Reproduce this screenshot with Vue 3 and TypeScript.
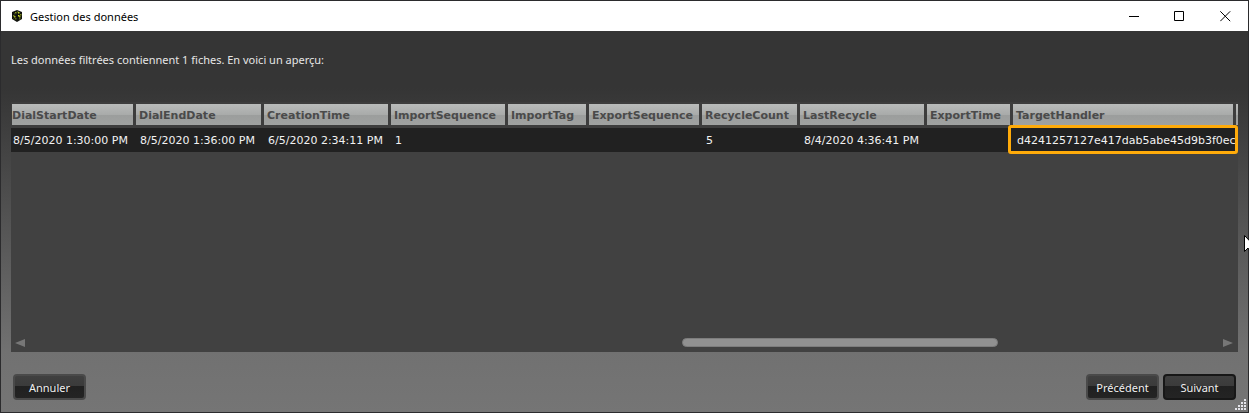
<script setup lang="ts">
interface Column {
  name: string
  width: number
  value: string
  marked?: boolean
}

const columns: Column[] = [
  { name: 'DialStartDate', width: 125, value: '8/5/2020 1:30:00 PM' },
  { name: 'DialEndDate', width: 128, value: '8/5/2020 1:36:00 PM' },
  { name: 'CreationTime', width: 127, value: '6/5/2020 2:34:11 PM' },
  { name: 'ImportSequence', width: 117, value: '1' },
  { name: 'ImportTag', width: 81, value: '' },
  { name: 'ExportSequence', width: 113, value: '' },
  { name: 'RecycleCount', width: 98, value: '5' },
  { name: 'LastRecycle', width: 127, value: '8/4/2020 4:36:41 PM' },
  { name: 'ExportTime', width: 86, value: '' },
  { name: 'TargetHandler', width: 223, value: 'd4241257127e417dab5abe45d9b3f0ec', marked: true },
]

const scroll = { start: 54.8, size: 26.4 }

// Lit facets of the cube in the title bar
const facets: [number, number, string][] = [
  [4, 2, '#8f9d1c'], [6, 1, '#4d5a18'], [7, 2, '#c3d426'], [3, 3, '#39401c'],
  [2, 5, '#6f7d1e'], [3, 6, '#aebd22'], [4, 8, '#5e6b1b'], [7, 5, '#d4e62b'],
  [8, 6, '#a5b521'], [9, 4, '#7b8a1f'], [8, 8, '#545f1b'], [2, 8, '#2f351b'],
]

const gripDots: [number, number][] = [
  [9, 0], [6, 3], [9, 3], [3, 6], [6, 6], [9, 6], [0, 9], [3, 9], [6, 9], [9, 9],
]
</script>

<template>
  <div class="window">
    <header class="titlebar">
      <svg class="logo" width="12" height="12" viewBox="0 0 12 12" aria-hidden="true">
        <path d="M6 0 11 2V9L6 12 1 9V2Z" fill="#11130d" />
        <rect v-for="(f, i) in facets" :key="i" :x="f[0]" :y="f[1]" width="1.5" height="1.5" :fill="f[2]" />
      </svg>
      <h1 class="title">Gestion des données</h1>
      <div class="controls">
        <button type="button" class="control" aria-label="Réduire">
          <svg width="11" height="11" viewBox="0 0 11 11"><path d="M1 5.5H11" stroke="#000" fill="none" /></svg>
        </button>
        <button type="button" class="control" aria-label="Agrandir">
          <svg width="11" height="11" viewBox="0 0 11 11"><path d="M.5 .5H9.5V9.5H.5Z" stroke="#000" fill="none" /></svg>
        </button>
        <button type="button" class="control" aria-label="Fermer">
          <svg width="11" height="11" viewBox="0 0 11 11"><path d="M.3 .3 10.2 10.2M10.2 .3 .3 10.2" stroke="#000" fill="none" /></svg>
        </button>
      </div>
    </header>

    <main class="content">
      <p class="message">Les données filtrées contiennent 1 fiches. En voici un aperçu:</p>

      <section class="grid" aria-label="Aperçu des fiches">
        <table>
          <colgroup>
            <col v-for="c in columns" :key="c.name" :style="{ width: c.width + 'px' }" />
            <col />
          </colgroup>
          <thead>
            <tr>
              <th v-for="c in columns" :key="c.name" scope="col"><div class="head">{{ c.name }}</div></th>
              <th><div class="head"></div></th>
            </tr>
          </thead>
          <tbody>
            <tr>
              <td v-for="c in columns" :key="c.name" :class="{ marked: c.marked }">{{ c.value }}</td>
              <td></td>
            </tr>
          </tbody>
        </table>

        <div class="scrollbar">
          <button type="button" class="arrow" aria-label="Défiler à gauche">
            <svg width="10" height="8" viewBox="0 0 10 8"><path d="M10 0V8L0 4Z" fill="#777" /></svg>
          </button>
          <div class="track">
            <div class="thumb" :style="{ marginLeft: scroll.start + '%', width: scroll.size + '%' }"></div>
          </div>
          <button type="button" class="arrow" aria-label="Défiler à droite">
            <svg width="10" height="8" viewBox="0 0 10 8"><path d="M0 0V8L10 4Z" fill="#777" /></svg>
          </button>
        </div>
      </section>

      <footer class="actions">
        <button type="button" class="action">Annuler</button>
        <span class="spacer"></span>
        <button type="button" class="action">Précédent</button>
        <button type="button" class="action primary">Suivant</button>
      </footer>
    </main>

    <svg class="grip" width="12" height="12" viewBox="0 0 12 12" aria-hidden="true">
      <g v-for="(d, i) in gripDots" :key="i">
        <rect :x="d[0]" :y="d[1]" width="2" height="2" fill="#e4e4ea" />
      </g>
    </svg>
    <svg class="pointer" width="5" height="18" viewBox="0 0 5 18" aria-hidden="true">
      <path d="M.5 .5V16.5L4 13L6.500 17.500L8.500 16.500L6.500 12H11.500Z" fill="#fff" stroke="#000" />
    </svg>
  </div>
</template>

<style>
body {
  margin: 0;
}
</style>

<style scoped>
.window {
  position: relative;
  display: flex;
  flex-direction: column;
  box-sizing: border-box;
  min-height: 100vh;
  border: 1px solid #2b2b2d;
  background: #333;
  font-family: "Noto Sans", "Open Sans", sans-serif;
  font-size: 11px;
}

.titlebar {
  display: flex;
  align-items: center;
  height: 30px;
  padding-left: 10px;
  background: #fff;
}

.title {
  flex: 1;
  margin: 0 0 0 7px;
  font-size: 11px;
  font-weight: 400;
  color: #000;
}

.controls {
  display: flex;
}

.control {
  display: flex;
  align-items: center;
  justify-content: center;
  width: 46px;
  height: 28px;
  padding: 0;
  border: 0;
  background: none;
}

.content {
  display: flex;
  flex: 1;
  flex-direction: column;
  padding: 0 10px;
  background: linear-gradient(#353535 0, #353535 15%, #717171 84%, #757575);
}

.message {
  margin: 20px 0 33px;
  line-height: 18px;
  color: #e6e6e6;
}

.grid {
  display: flex;
  flex: 1;
  flex-direction: column;
  justify-content: space-between;
  overflow: hidden;
  background: #414141;
  font-family: "DejaVu Sans", Verdana, sans-serif;
  font-size: 11px;
}

table {
  width: 100%;
  table-layout: fixed;
  border-collapse: collapse;
}

thead {
  background: #3d3d3d;
}

th,
td {
  padding: 0;
  text-align: left;
  white-space: nowrap;
}

th {
  padding: 2px 3px 3px 0;
}

th:first-child {
  padding-left: 1px;
}

th:last-child {
  padding-right: 0;
}

.head {
  box-sizing: border-box;
  height: 21px;
  padding-left: 3px;
  overflow: hidden;
  background: linear-gradient(#b9bbba 0, #a9abaa 50%, #9b9d9c 50%, #a0a2a1 100%);
  font-weight: 700;
  line-height: 23px;
  color: #4a4a4a;
}

th:first-child .head {
  padding-left: 0;
}

td {
  position: relative;
  height: 24px;
  padding-left: 4px;
  background: #212121;
  color: #f2f2f2;
}

td:first-child {
  padding-left: 2px;
}

.marked::after {
  content: "";
  position: absolute;
  z-index: 1;
  inset: -3px -2px -2px -5px;
  border: 3px solid #ffab0a;
  border-radius: 3px;
}

.scrollbar {
  display: flex;
  align-items: center;
  height: 19px;
  padding: 0 5px 0 4px;
}

.arrow {
  display: flex;
  padding: 0;
  border: 0;
  background: none;
}

.track {
  flex: 1;
}

.thumb {
  box-sizing: border-box;
  height: 9px;
  border: 1px solid #7d7d7d;
  border-radius: 5px;
  background: #919191;
}

.actions {
  display: flex;
  gap: 4px;
  padding: 22px 2px 12px;
}

.spacer {
  flex: 1;
}

.action {
  min-width: 73px;
  height: 26px;
  padding: 0 6px;
  border: 2px solid #4a4a4a;
  border-radius: 4px;
  background: linear-gradient(#404040 0, #3b3b3b 45%, #202020 45%, #242424 100%);
  font: inherit;
  color: #f0f0f0;
}

.primary {
  border-color: #171717;
}

.grip {
  position: absolute;
  right: 1px;
  bottom: 1px;
}

.pointer {
  position: absolute;
  right: -1px;
  top: 234px;
}
</style>
